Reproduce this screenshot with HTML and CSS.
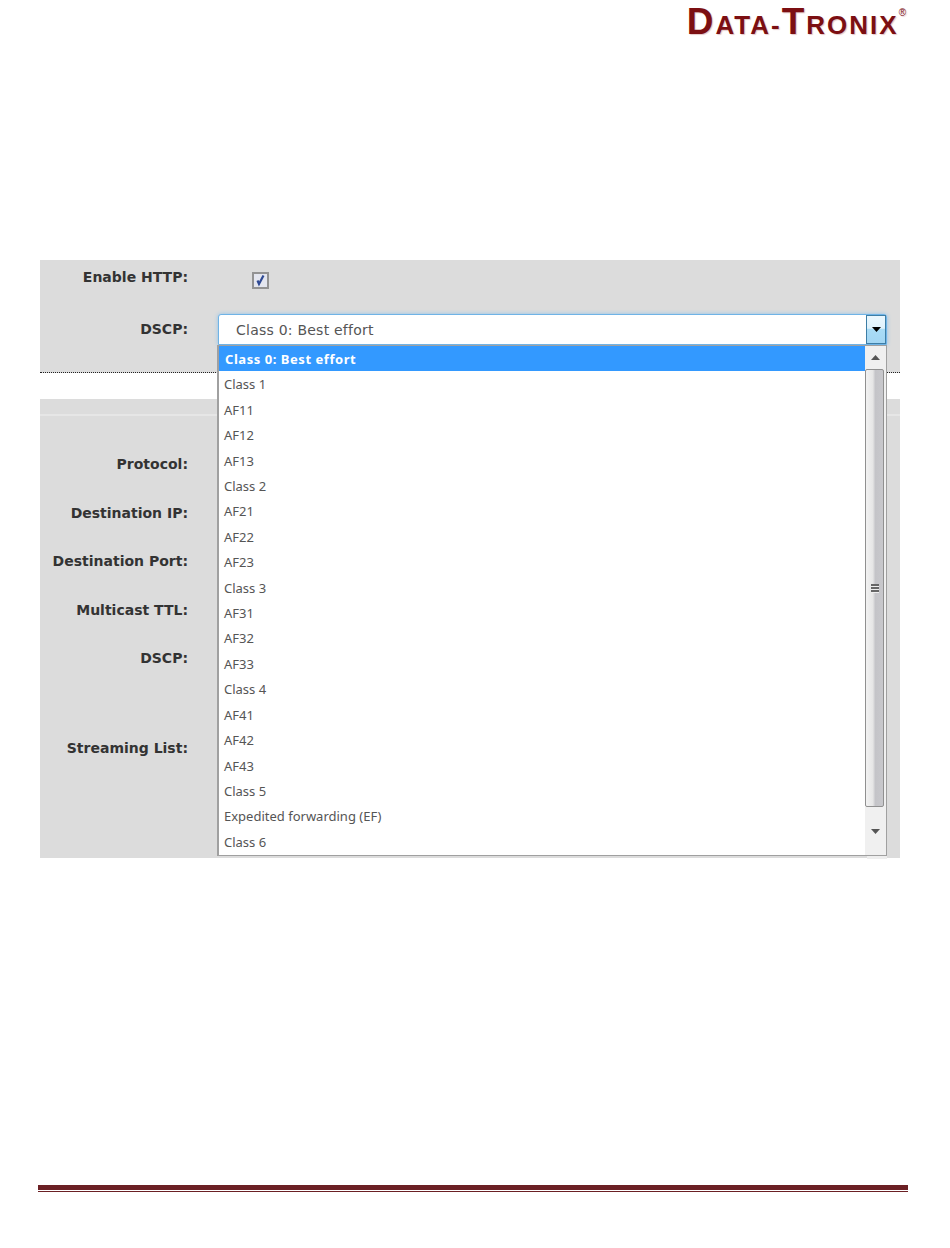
FILE: index.html
```html
<!DOCTYPE html>
<html lang="en">
<head>
<meta charset="utf-8">
<title>DSCP settings</title>
<link rel="stylesheet" href="styles.css">
</head>
<body>
<div class="page">
  <header class="header">
    <div class="logo"><span class="cap">D</span>ATA-<span class="cap">T</span>RONIX<sup class="reg">®</sup></div>
  </header>
  <main class="content">
    <section class="panel panel-http">
      <div class="row row-check">
        <div class="label">Enable HTTP:</div>
        <div class="check">
          <svg width="17" height="17" viewBox="0 0 17 17"><rect x="1" y="1" width="15" height="15" fill="#e4e6ef" stroke="#939393" stroke-width="2"/><path d="M5.500 8.500l1.500 3.500L11.500 3.500" fill="none" stroke="#2f4a94" stroke-width="2.200"/></svg>
        </div>
      </div>
      <div class="row row-select">
        <div class="label">DSCP:</div>
        <div class="select">
          <div class="select-value">Class 0: Best effort</div>
          <div class="select-btn"><svg width="9" height="5" viewBox="0 0 9 5"><path d="M0 0h9L4.500 5z" fill="#000"/></svg></div>
          <div class="menu">
            <ul class="options">
              <li class="option selected">Class 0: Best effort</li>
              <li class="option">Class 1</li>
              <li class="option">AF11</li>
              <li class="option">AF12</li>
              <li class="option">AF13</li>
              <li class="option">Class 2</li>
              <li class="option">AF21</li>
              <li class="option">AF22</li>
              <li class="option">AF23</li>
              <li class="option">Class 3</li>
              <li class="option">AF31</li>
              <li class="option">AF32</li>
              <li class="option">AF33</li>
              <li class="option">Class 4</li>
              <li class="option">AF41</li>
              <li class="option">AF42</li>
              <li class="option">AF43</li>
              <li class="option">Class 5</li>
              <li class="option">Expedited forwarding (EF)</li>
              <li class="option">Class 6</li>
            </ul>
            <div class="scrollbar">
              <div class="sb-btn sb-up"><svg width="9" height="5" viewBox="0 0 9 5"><path d="M0 5h9L4.500 0z" fill="#555"/></svg></div>
              <div class="sb-thumb">
                <div class="grip"></div>
              </div>
              <div class="sb-btn sb-down"><svg width="9" height="5" viewBox="0 0 9 5"><path d="M0 0h9L4.500 5z" fill="#555"/></svg></div>
            </div>
          </div>
        </div>
      </div>
    </section>
    <section class="panel panel-stream">
      <div class="stream-line"></div>
      <div class="label stream-label l-protocol">Protocol:</div>
      <div class="label stream-label">Destination IP:</div>
      <div class="label stream-label">Destination Port:</div>
      <div class="label stream-label">Multicast TTL:</div>
      <div class="label stream-label">DSCP:</div>
      <div class="label stream-label l-list">Streaming List:</div>
    </section>
  </main>
  <footer class="footer">
    <div class="rule-thick"></div>
    <div class="rule-thin"></div>
  </footer>
</div>
</body>
</html>
```
FILE: styles.css
```css
* { box-sizing: border-box; }
html, body { margin: 0; padding: 0; background: #fff; }
.page {
  width: 950px;
  height: 1248px;
  display: flex;
  flex-direction: column;
  font-family: "DejaVu Sans", Verdana, sans-serif;
  overflow: hidden;
}
.header {
  height: 260px;
  display: flex;
  justify-content: flex-end;
  align-items: flex-start;
  padding: 2px 44px 0 0;
}
.logo {
  font-family: "Liberation Sans", Arial, sans-serif;
  font-weight: 700;
  font-size: 26px;
  line-height: 40px;
  letter-spacing: 2px;
  color: #7c0f12;
  text-shadow: 1px 1px 1px #e3c8c8;
  white-space: nowrap;
}
.cap { font-size: 37px; }
.reg { font-size: 10px; font-weight: 400; letter-spacing: 0; vertical-align: 18px; line-height: 0; }
.content { display: flex; flex-direction: column; padding: 0 50px 0 40px; }
.panel { background: #dcdcdc; }
.panel-http {
  height: 113px;
  border-bottom: 1px dotted #222;
  display: flex;
  flex-direction: column;
}
.panel-stream {
  margin-top: 26px;
  height: 459px;
  display: flex;
  flex-direction: column;
}
.stream-line { height: 2px; margin-top: 15px; background: #e6e6e6; }
.row { display: flex; }
.row-check { padding-top: 9px; height: 54px; }
.label {
  width: 148px;
  flex: none;
  text-align: right;
  font-weight: 700;
  font-size: 14px;
  line-height: 16px;
  color: #333;
  white-space: nowrap;
}
.check { margin: 3px 0 0 64px; height: 17px; }
.check svg { display: block; }
.row-select .label { padding-top: 7px; }
.select {
  position: relative;
  margin-left: 30px;
  width: 669px;
  height: 31px;
  background: #fff;
  border: 1px solid #6fb3e6;
  border-radius: 3px 3px 0 0;
  box-shadow: 0 0 4px #8fc3ea;
  display: flex;
  align-items: center;
}
.select-value {
  flex: 1;
  padding-left: 17px;
  font-size: 14px;
  letter-spacing: 0.23px;
  color: #555;
  white-space: nowrap;
}
.select-btn {
  flex: none;
  width: 20px;
  height: 29px;
  border: 1px solid #3d7ea6;
  background: linear-gradient(#eaf7fe 0%, #dff2fc 45%, #a9dcf6 50%, #a2d6f4 100%);
  display: flex;
  align-items: center;
  justify-content: center;
}
.menu {
  position: absolute;
  top: 30px;
  left: -2px;
  width: 670px;
  height: 511px;
  background: #fff;
  border: 1px solid #a0a0a0;
  border-width: 1px 1px 1px 2px;
  display: flex;
}
.menu::after {
  content: "";
  position: absolute;
  top: 100%;
  right: -1px;
  width: 20px;
  height: 3px;
  margin-top: 1px;
  background: #eeeeee;
}
.options { flex: 1; margin: 0; padding: 0; list-style: none; }
.option {
  height: 25.42px;
  line-height: 27px;
  padding-left: 5px;
  font-family: "Noto Sans", Tahoma, sans-serif;
  font-size: 13px;
  color: #555;
}
.option.selected { background: #3399ff; color: #fff; font-weight: 700; letter-spacing: 0.55px; padding-left: 6px; }
.scrollbar {
  flex: none;
  width: 21px;
  background: #f0f0f0;
  display: flex;
  flex-direction: column;
}
.sb-btn { flex: none; display: flex; justify-content: center; align-items: center; }
.sb-up { height: 23px; }
.sb-down { flex: 1; }
.sb-thumb {
  flex: none;
  height: 438px;
  margin-right: 2px;
  border: 1px solid #909090;
  border-radius: 2px;
  background: linear-gradient(90deg, #f2f2f2 0%, #e6e6e6 40%, #c4c4c8 55%, #c8c8cc 100%);
  display: flex;
  align-items: center;
  justify-content: center;
}
.grip {
  width: 8px;
  height: 9px;
  background: repeating-linear-gradient(#666 0 2px, #eee 2px 3px);
}
.l-protocol { margin-top: 40px; }
.stream-label { margin-bottom: 32.6px; }
.l-list { margin-top: 41px; }
.footer { margin-top: auto; padding: 0 42px 56px 38px; }
.rule-thick { height: 5px; background: #6b2024; }
.rule-thin { height: 1px; margin-top: 1px; background: #6b2024; }
```
